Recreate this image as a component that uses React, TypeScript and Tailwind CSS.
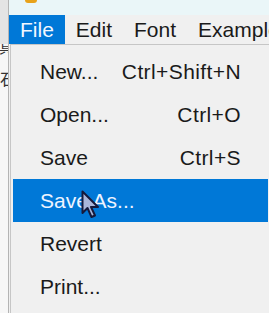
import { ReactNode } from "react";

const items: { label: string; shortcut?: string; active?: boolean }[] = [
  { label: "New...", shortcut: "Ctrl+Shift+N" },
  { label: "Open...", shortcut: "Ctrl+O" },
  { label: "Save", shortcut: "Ctrl+S" },
  { label: "Save As...", active: true },
  { label: "Revert" },
  { label: "Print..." },
];

function MenuTitle({ children, active }: { children: ReactNode; active?: boolean }) {
  return (
    <div
      className={
        active
          ? "h-full flex items-center px-[11px] bg-[#0078d7] text-[#f2f7ff]"
          : "h-full flex items-center px-[11px] text-[#1a1a1a]"
      }
    >
      {children}
    </div>
  );
}

function Cursor() {
  return (
    <svg
      className="absolute left-[81px] top-[190px]"
      width="22"
      height="30"
      viewBox="0 0 22 30"
    >
      <path
        d="M1.5 1.5 L1.5 23 L6.5 18 L10.5 27 L14 25.5 L10 17 L17 17 Z"
        fill="#aab6d9"
        stroke="#16193a"
        strokeWidth="2"
        strokeLinejoin="round"
      />
    </svg>
  );
}

export default function App() {
  return (
    <div
      className="relative w-[269px] h-[313px] overflow-hidden flex bg-[#f0f0f0] text-[21px]"
      style={{ fontFamily: '"Liberation Sans", Arial, "Noto Sans CJK JP", sans-serif' }}
    >
      {/* window behind, left edge */}
      <div className="w-[9px] shrink-0 bg-[#e4e4e4] border-r border-[#b4b4b4] flex flex-col items-end overflow-hidden">
        <div className="h-[44px] shrink-0" />
        <div className="w-[9px] bg-[#f7f7f7] flex-1 flex flex-col items-end overflow-hidden">
          <span className="text-[15px] leading-[15px] text-[#333] -mr-[6px] mt-[-5px]" style={{ fontFamily: '"Noto Sans CJK JP", sans-serif' }}>具</span>
          <span className="text-[16px] leading-[16px] text-[#333] -mr-[8px] mt-[16px]" style={{ fontFamily: '"Noto Sans CJK JP", sans-serif' }}>石</span>
        </div>
      </div>

      <div className="flex-1 flex flex-col min-w-0">
        {/* title strip */}
        <div className="h-[15px] shrink-0 bg-[#eaf6f8] relative">
          <div className="absolute left-[16px] top-0 w-[12px] h-[3px] rounded-b-full bg-[#e8a21a]" />
        </div>

        {/* menu bar */}
        <div className="h-[29px] shrink-0 flex items-stretch bg-[#f0f0f0] whitespace-nowrap">
          <MenuTitle active>File</MenuTitle>
          <MenuTitle>Edit</MenuTitle>
          <MenuTitle>Font</MenuTitle>
          <MenuTitle>Example</MenuTitle>
        </div>

        {/* dropdown */}
        <div className="flex-1 ml-[1px] border-l border-t border-[#c6c6c6] bg-[#f0f0f0] pt-[5px] pl-[2px] pr-[1px]">
          {items.map((it) => (
            <div
              key={it.label}
              className={
                it.active
                  ? "h-[43px] flex items-center justify-between pl-[27px] pr-[27px] bg-[#0078d7] text-[#eef4ff]"
                  : "h-[43px] flex items-center justify-between pl-[27px] pr-[27px] text-[#1a1a1a]"
              }
            >
              <span>{it.label}</span>
              {it.shortcut && <span className="tracking-[0.4px]">{it.shortcut}</span>}
            </div>
          ))}
        </div>
      </div>

      <Cursor />
    </div>
  );
}
